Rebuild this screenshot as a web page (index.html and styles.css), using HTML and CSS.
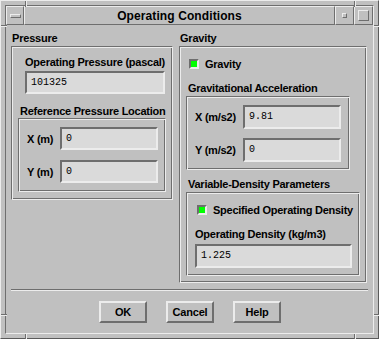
FILE: index.html
```html
<!DOCTYPE html>
<html lang="en">
<head>
    <meta charset="UTF-8">
    <title>Operating Conditions</title>
    <link rel="stylesheet" href="styles.css">
</head>
<body>
    <div class="window">
        <div class="frame-inner">
            <div class="titlebar">
                <div class="tb-btn tb-menu"><span class="menu-bar"></span></div>
                <div class="tb-title">Operating Conditions</div>
                <div class="tb-btn tb-min"><span class="min-box"></span></div>
                <div class="tb-btn tb-max"><span class="max-box"></span></div>
            </div>

            <div class="dialog">
                <div class="columns">
                    <div class="col col-pressure">
                        <div class="group-label">Pressure</div>
                        <div class="frame pressure-frame">
                            <div class="label op-pressure-label">Operating Pressure (pascal)</div>
                            <div class="field op-pressure-field">101325</div>
                            <div class="label ref-label">Reference Pressure Location</div>
                            <div class="frame ref-frame">
                                <div class="row">
                                    <span class="label row-label">X (m)</span>
                                    <div class="field small-field">0</div>
                                </div>
                                <div class="row">
                                    <span class="label row-label">Y (m)</span>
                                    <div class="field small-field">0</div>
                                </div>
                            </div>
                        </div>
                    </div>

                    <div class="col col-gravity">
                        <div class="group-label">Gravity</div>
                        <div class="frame gravity-frame">
                            <div class="check-row gravity-check">
                                <span class="checkbox"><span class="check-fill"></span></span>
                                <span class="label">Gravity</span>
                            </div>
                            <div class="label grav-label">Gravitational Acceleration</div>
                            <div class="frame grav-frame">
                                <div class="row">
                                    <span class="label row-label-wide">X (m/s2)</span>
                                    <div class="field small-field">9.81</div>
                                </div>
                                <div class="row">
                                    <span class="label row-label-wide">Y (m/s2)</span>
                                    <div class="field small-field">0</div>
                                </div>
                            </div>
                            <div class="label density-label">Variable-Density Parameters</div>
                            <div class="frame density-frame">
                                <div class="check-row density-check">
                                    <span class="checkbox"><span class="check-fill"></span></span>
                                    <span class="label">Specified Operating Density</span>
                                </div>
                                <div class="label op-density-label">Operating Density (kg/m3)</div>
                                <div class="field op-density-field">1.225</div>
                            </div>
                        </div>
                    </div>
                </div>

                <div class="separator"></div>

                <div class="buttons">
                    <button class="push-button">OK</button>
                    <button class="push-button">Cancel</button>
                    <button class="push-button">Help</button>
                </div>
            </div>
        </div>

        <!-- resize handle marks on the frame -->
        <span class="mark mark-v" style="left: 24px; top: 0;"></span>
        <span class="mark mark-v" style="left: 353px; top: 0;"></span>
        <span class="mark mark-v" style="left: 24px; top: 333px;"></span>
        <span class="mark mark-v" style="left: 353px; top: 333px;"></span>
        <span class="mark mark-h" style="left: 0; top: 24px;"></span>
        <span class="mark mark-h" style="left: 373px; top: 24px;"></span>
        <span class="mark mark-h" style="left: 0; top: 313px;"></span>
        <span class="mark mark-h" style="left: 373px; top: 313px;"></span>
    </div>
</body>
</html>
```

FILE: styles.css
```css
body {
    margin: 0;
    padding: 0;
    background-color: #c0c0c0;
    font-family: "Liberation Sans", Arial, sans-serif;
    color: #000;
}
* {
    box-sizing: border-box;
}
.window {
    position: relative;
    width: 379px;
    height: 339px;
    background-color: #c0c0c0;
    border: 1px solid;
    border-color: #ececec #5a5a5a #5a5a5a #ececec;
    padding: 4px;
}
.frame-inner {
    width: 100%;
    height: 100%;
    border: 1px solid;
    border-color: #6e6e6e #ececec #ececec #6e6e6e;
    display: flex;
    flex-direction: column;
}
.mark {
    position: absolute;
}
.mark-v {
    width: 2px;
    height: 6px;
    border-left: 1px solid #6e6e6e;
    border-right: 1px solid #ececec;
}
.mark-h {
    width: 6px;
    height: 2px;
    border-top: 1px solid #6e6e6e;
    border-bottom: 1px solid #ececec;
}

/* title bar */
.titlebar {
    display: flex;
    height: 19px;
    flex-shrink: 0;
}
.tb-btn,
.tb-title {
    border: 1px solid;
    border-color: #ececec #6e6e6e #6e6e6e #ececec;
    display: flex;
    align-items: center;
    justify-content: center;
}
.tb-menu {
    width: 18px;
}
.tb-title {
    flex: 1;
    font-size: 12px;
    font-weight: bold;
    letter-spacing: 0.1px;
}
.tb-min,
.tb-max {
    width: 19px;
}
.menu-bar {
    width: 11px;
    height: 4px;
    border: 1px solid;
    border-color: #ececec #6e6e6e #6e6e6e #ececec;
}
.min-box {
    width: 5px;
    height: 5px;
    border: 1px solid;
    border-color: #ececec #6e6e6e #6e6e6e #ececec;
}
.max-box {
    width: 11px;
    height: 11px;
    border: 1px solid;
    border-color: #ececec #6e6e6e #6e6e6e #ececec;
}

/* dialog body */
.dialog {
    flex: 1;
    display: flex;
    flex-direction: column;
}
.columns {
    display: flex;
    align-items: flex-start;
    gap: 6px;
    padding: 6px 6px 0 5px;
}
.col-pressure {
    width: 162px;
}
.col-gravity {
    width: 188px;
}
.label {
    font-size: 11px;
    font-weight: bold;
    letter-spacing: -0.25px;
    line-height: 14px;
    white-space: nowrap;
}
.group-label {
    font-size: 11px;
    font-weight: bold;
    letter-spacing: -0.2px;
    line-height: 15px;
    height: 15px;
    padding-left: 1px;
}
.frame {
    border: 1px solid;
    border-color: #6e6e6e #ececec #ececec #6e6e6e;
    box-shadow: inset 1px 1px #ececec, inset -1px -1px #6e6e6e;
}
.field {
    height: 23px;
    border: 2px solid;
    border-color: #6e6e6e #ececec #ececec #6e6e6e;
    background-color: #dadada;
    font-family: "Liberation Mono", "Courier New", monospace;
    font-size: 10px;
    line-height: 19px;
    padding-left: 4px;
}

/* pressure group */
.pressure-frame {
    height: 154px;
    padding: 8px 0 0 13px;
}
.op-pressure-field {
    width: 140px;
    margin-top: 2px;
}
.ref-label {
    margin-top: 10px;
    margin-left: -5px;
}
.ref-frame {
    width: 148px;
    height: 74px;
    margin-left: -7px;
    padding: 8px 0 0 8px;
}
.row {
    display: flex;
    align-items: center;
    height: 23px;
    margin-bottom: 10px;
}
.row-label {
    width: 33px;
}
.row-label-wide {
    width: 48px;
}
.small-field {
    width: 98px;
}

/* gravity group */
.gravity-frame {
    height: 237px;
    padding: 10px 0 0 6px;
}
.check-row {
    display: flex;
    align-items: center;
    gap: 6px;
    height: 14px;
}
.gravity-check {
    margin-left: 3px;
}
.checkbox {
    width: 10px;
    height: 10px;
    border: 2px solid;
    border-color: #6e6e6e #ececec #ececec #6e6e6e;
    background-color: #00ff00;
    display: inline-block;
}
.check-fill {
    display: block;
}
.grav-label {
    margin-top: 10px;
    margin-left: 2px;
}
.grav-frame {
    width: 164px;
    height: 74px;
    margin-top: 1px;
    padding: 8px 0 0 8px;
}
.grav-frame .row {
    height: 24px;
    margin-bottom: 9px;
}
.grav-frame .small-field {
    height: 24px;
}
.density-label {
    margin-top: 7px;
    margin-left: 2px;
}
.density-frame {
    width: 174px;
    height: 84px;
    margin-top: 1px;
    padding: 10px 0 0 8px;
}
.density-check {
    margin-left: 2px;
}
.op-density-label {
    margin-top: 10px;
}
.op-density-field {
    width: 157px;
    height: 24px;
    line-height: 20px;
    margin-top: 3px;
}

/* bottom */
.separator {
    margin: 6px 0 0 5px;
    width: 357px;
    height: 2px;
    border-top: 1px solid #6e6e6e;
    border-bottom: 1px solid #ececec;
}
.buttons {
    display: flex;
    justify-content: center;
    gap: 19px;
    margin-top: 10px;
    padding-left: 1px;
}
.push-button {
    width: 48px;
    height: 22px;
    margin: 0;
    padding: 0;
    background-color: #c0c0c0;
    border: 2px solid;
    border-color: #ececec #6e6e6e #6e6e6e #ececec;
    font-family: "Liberation Sans", Arial, sans-serif;
    font-size: 11px;
    font-weight: bold;
    letter-spacing: -0.2px;
    color: #000;
}
```
